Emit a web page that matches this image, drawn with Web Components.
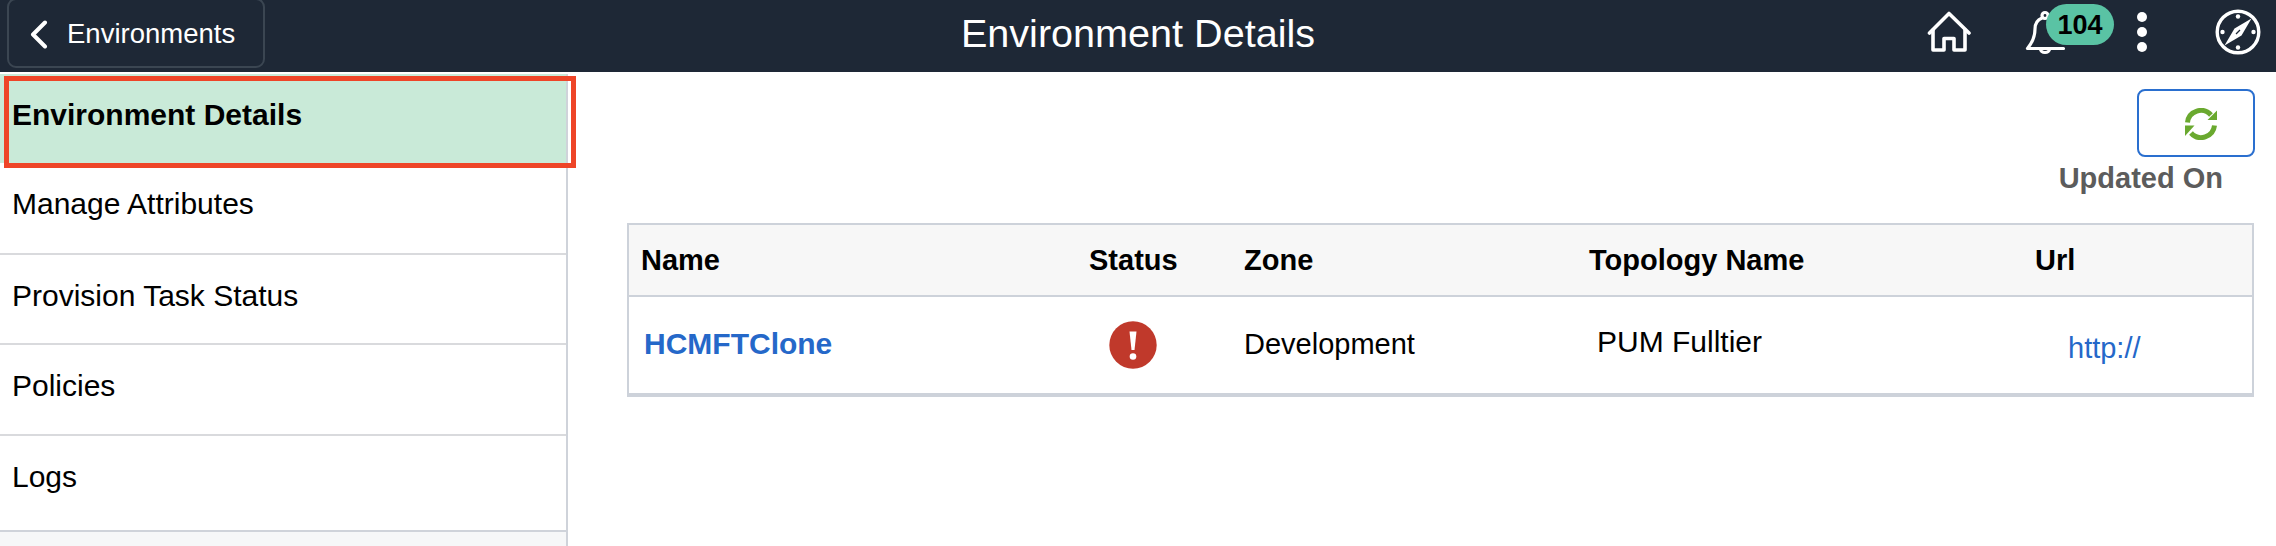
<!DOCTYPE html>
<html lang="en">
<head>
<meta charset="utf-8">
<title>Environment Details</title>
<style>
    html, body {
        margin: 0;
        height: 100%;
        background: #fff;
        color: #000;
        font-family: "Liberation Sans", Arial, sans-serif;
        overflow: hidden;
    }
</style>
</head>
<body>
<app-header heading="Environment Details" back="Environments" count="104"></app-header>
<page-layout>
    <side-nav slot="side">
        <nav-item active>Environment Details</nav-item>
        <nav-item style="--row: 92px; --line: #d9dadd">Manage Attributes</nav-item>
        <nav-item style="--row: 90px; --line: #d9dadd">Provision Task Status</nav-item>
        <nav-item style="--row: 91px; --line: #d9dadd">Policies</nav-item>
        <nav-item style="--row: 96px; --line: #cfd3da">Logs</nav-item>
    </side-nav>
    <refresh-bar label="Updated On"></refresh-bar>
    <env-table>
        <table-row head>
            <table-cell style="--pad: 12px">Name</table-cell>
            <table-cell style="--pad: 11px">Status</table-cell>
            <table-cell>Zone</table-cell>
            <table-cell>Topology Name</table-cell>
            <table-cell>Url</table-cell>
        </table-row>
        <table-row>
            <table-cell style="--pad: 15px; --size: 30px; --weight: 700; --color: #2568c9">HCMFTClone</table-cell>
            <table-cell style="--pad: 31px; --top: 24px"><status-icon></status-icon></table-cell>
            <table-cell>Development</table-cell>
            <table-cell style="--pad: 8px; --size: 30px; --top: 28px">PUM Fulltier</table-cell>
            <table-cell style="--pad: 33px; --top: 34px; --color: #2568c9">http://</table-cell>
        </table-row>
    </env-table>
</page-layout>

<script>
class AppHeader extends HTMLElement {
    connectedCallback() {
        this.attachShadow({ mode: 'open' });
        this.shadowRoot.innerHTML = `
            <style>
                :host {
                    display: grid;
                    grid-template-columns: 1fr auto 1fr;
                    height: 72px;
                    background: #1e2836;
                    color: #fff;
                }

                .back {
                    display: flex;
                    align-items: center;
                    box-sizing: border-box;
                    width: 258px;
                    height: 70px;
                    margin: -2px 0 0 7px;
                    padding: 2px 0 0 21px;
                    border: 2px solid #3b4652;
                    border-radius: 9px;
                    font-size: 27.500px;
                    gap: 19px;
                }

                h1 {
                    margin: 0;
                    padding-top: 9px;
                    font-size: 39.600px;
                    font-weight: 400;
                    line-height: 48px;
                }

                .tools {
                    display: flex;
                    justify-content: flex-end;
                    align-items: flex-start;
                    padding-right: 14px;
                }

                svg {
                    display: block;
                    flex: none;
                }

                .home {
                    margin-top: 11px;
                }

                .bell {
                    position: relative;
                    margin: 9px 0 0 52px;
                    width: 42px;
                    height: 46px;
                }

                .badge {
                    position: absolute;
                    left: 22px;
                    top: -5px;
                    width: 68px;
                    height: 41px;
                    border-radius: 21px;
                    background: #5ac3a4;
                    color: #000;
                    font-size: 27px;
                    font-weight: 700;
                    line-height: 43px;
                    text-align: center;
                }

                .dots {
                    margin: 12px 0 0 71px;
                    display: flex;
                    flex-direction: column;
                    gap: 5px;
                }

                .dots i {
                    display: block;
                    width: 10px;
                    height: 10px;
                    border-radius: 50%;
                    background: #fff;
                }

                .compass {
                    margin: 8px 0 0 67px;
                }
            </style>
            <div>
                <div class="back">
                    <svg width="18" height="29" viewBox="0 0 18 29" fill="none" stroke="#fff" stroke-width="4" stroke-linecap="round" stroke-linejoin="round">
                        <path d="M15 2.5 3 14.5l12 12"/>
                    </svg>
                    <span>${this.getAttribute('back')}</span>
                </div>
            </div>
            <h1>${this.getAttribute('heading')}</h1>
            <div class="tools">
                <svg class="home" width="46" height="42" viewBox="0 0 46 42" fill="none" stroke="#fff" stroke-width="3.600" stroke-linecap="round" stroke-linejoin="round">
                    <path d="M3.500 22 23 2.500 43 22"/>
                    <path d="M7 19v20h11V27.500h10V39h11V19"/>
                </svg>
                <div class="bell">
                    <svg width="42" height="46" viewBox="0 0 42 46" fill="none" stroke="#fff" stroke-width="3.200" stroke-linecap="round" stroke-linejoin="round">
                        <circle cx="21" cy="6.500" r="3"/>
                        <path d="M18 9C13 11 11 15 11 20c0 9-3 14-7.500 19.500h36"/>
                        <path d="M16.500 40a4.500 3.500 0 0 0 9 0"/>
                    </svg>
                    <span class="badge">${this.getAttribute('count')}</span>
                </div>
                <div class="dots"><i></i><i></i><i></i></div>
                <svg class="compass" width="48" height="48" viewBox="0 0 48 48">
                    <circle cx="24" cy="24" r="20.800" fill="none" stroke="#fff" stroke-width="3.400"/>
                    <path d="M37.500 10.500 27.500 27.500 10.500 37.500 20.500 20.500z" fill="#fff"/>
                    <path d="M26 22 22 26" stroke="#1e2836" stroke-width="1.200"/>
                    <g fill="#fff">
                        <circle cx="24" cy="8.500" r="2.200"/>
                        <circle cx="24" cy="39.500" r="2.200"/>
                        <circle cx="8.500" cy="24" r="2.200"/>
                        <circle cx="39.500" cy="24" r="2.200"/>
                    </g>
                </svg>
            </div>
        `;
    }
}

class PageLayout extends HTMLElement {
    connectedCallback() {
        this.attachShadow({ mode: 'open' });
        this.shadowRoot.innerHTML = `
            <style>
                :host {
                    display: grid;
                    grid-template-columns: 568px 1fr;
                    height: 474px;
                    padding-top: 2px;
                    box-sizing: border-box;
                }

                main {
                    display: flex;
                    flex-direction: column;
                    padding: 15px 22px 0 59px;
                    min-width: 0;
                }
            </style>
            <slot name="side"></slot>
            <main><slot></slot></main>
        `;
    }
}

class SideNav extends HTMLElement {
    connectedCallback() {
        this.attachShadow({ mode: 'open' });
        this.shadowRoot.innerHTML = `
            <style>
                :host {
                    display: flex;
                    flex-direction: column;
                    position: relative;
                    box-sizing: border-box;
                    border-right: 2px solid #cfd3da;
                    background: #f6f7f8;
                }

                /* annotation drawn over the screenshot */
                .marker {
                    position: absolute;
                    left: 4px;
                    top: 2px;
                    width: 572px;
                    height: 92px;
                    box-sizing: border-box;
                    border: 5px solid #ee4528;
                }
            </style>
            <slot></slot>
            <div class="marker"></div>
        `;
    }
}

class NavItem extends HTMLElement {
    connectedCallback() {
        this.attachShadow({ mode: 'open' });
        this.shadowRoot.innerHTML = `
            <style>
                :host {
                    display: block;
                    box-sizing: border-box;
                    height: var(--row, 89px);
                    padding: 24px 0 0 12px;
                    background: #fff;
                    border-bottom: 2px solid var(--line, transparent);
                    font-size: 30px;
                    line-height: 34px;
                }

                :host([active]) {
                    background: #c9ead8;
                    border-bottom: 0;
                    font-weight: 700;
                }
            </style>
            <slot></slot>
        `;
    }
}

class RefreshBar extends HTMLElement {
    connectedCallback() {
        this.attachShadow({ mode: 'open' });
        this.shadowRoot.innerHTML = `
            <style>
                :host {
                    display: flex;
                    flex-direction: column;
                    align-items: flex-end;
                }

                button {
                    display: flex;
                    align-items: center;
                    justify-content: center;
                    box-sizing: border-box;
                    width: 118px;
                    height: 68px;
                    padding: 2px 0 0 10px;
                    margin-right: -1px;
                    border: 2px solid #2a6fcf;
                    border-radius: 8px;
                    background: #fff;
                }

                span {
                    margin: 4px 31px 28px 0;
                    color: #5c5c5c;
                    font-size: 29px;
                    font-weight: 700;
                    line-height: 34px;
                }
            </style>
            <button aria-label="Refresh">
                <svg width="32" height="32" viewBox="0 0 32 32" fill="none">
                    <g stroke="#6aa92f" stroke-width="5">
                        <path d="M2.500 14.500A13.500 13.500 0 0 1 26 7"/>
                        <path d="M29.500 17.500A13.500 13.500 0 0 1 6 25"/>
                    </g>
                    <g fill="#6aa92f">
                        <path d="M32 2.500V12H22.500z"/>
                        <path d="M0 17.500h9.500L0 28z"/>
                    </g>
                </svg>
            </button>
            <span>${this.getAttribute('label')}</span>
        `;
    }
}

class EnvTable extends HTMLElement {
    connectedCallback() {
        this.attachShadow({ mode: 'open' });
        this.shadowRoot.innerHTML = `
            <style>
                :host {
                    display: block;
                    box-sizing: border-box;
                    height: 174px;
                    border: 2px solid #cdd2da;
                    border-bottom-width: 4px;
                    --cols: 449px 166px 345px 446px 1fr;
                }
            </style>
            <slot></slot>
        `;
    }
}

class TableRow extends HTMLElement {
    connectedCallback() {
        this.attachShadow({ mode: 'open' });
        this.shadowRoot.innerHTML = `
            <style>
                :host {
                    display: grid;
                    grid-template-columns: var(--cols);
                    height: 96px;
                    font-size: 29px;
                    line-height: 34px;
                    --top: 30px;
                }

                :host([head]) {
                    box-sizing: border-box;
                    height: 72px;
                    background: #f7f7f7;
                    border-bottom: 2px solid #cdd2da;
                    font-weight: 700;
                    --top: 18px;
                }
            </style>
            <slot></slot>
        `;
    }
}

class TableCell extends HTMLElement {
    connectedCallback() {
        this.attachShadow({ mode: 'open' });
        this.shadowRoot.innerHTML = `
            <style>
                :host {
                    display: block;
                    padding: var(--top) 0 0 var(--pad, 0);
                    color: var(--color, #000);
                    font-size: var(--size, inherit);
                    font-weight: var(--weight, inherit);
                    white-space: nowrap;
                }
            </style>
            <slot></slot>
        `;
    }
}

class StatusIcon extends HTMLElement {
    connectedCallback() {
        this.attachShadow({ mode: 'open' });
        this.shadowRoot.innerHTML = `
            <style>
                :host {
                    display: block;
                    width: 48px;
                    height: 48px;
                }
            </style>
            <svg width="48" height="48" viewBox="0 0 48 48" role="img" aria-label="Error">
                <circle cx="24" cy="24" r="23.700" fill="#c0392b"/>
                <path d="M20.500 10.500h7L25.500 29h-3z" fill="#fff"/>
                <circle cx="24" cy="35.500" r="3.300" fill="#fff"/>
            </svg>
        `;
    }
}

customElements.define('app-header', AppHeader);
customElements.define('page-layout', PageLayout);
customElements.define('side-nav', SideNav);
customElements.define('nav-item', NavItem);
customElements.define('refresh-bar', RefreshBar);
customElements.define('env-table', EnvTable);
customElements.define('table-row', TableRow);
customElements.define('table-cell', TableCell);
customElements.define('status-icon', StatusIcon);
</script>
</body>
</html>
